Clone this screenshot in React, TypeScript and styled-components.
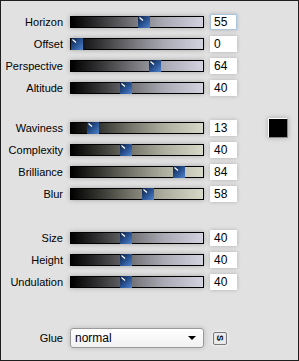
import React from 'react';
import styled, { createGlobalStyle } from 'styled-components';

interface SliderRowProps {
  label: string;
  value: number;
  tone: 'blue' | 'sand';
  focused?: boolean;
  extra?: React.ReactNode;
}

const GlobalStyle = createGlobalStyle`
  html, body {
    margin: 0;
    padding: 0;
    background: #e1e1e1;
  }
  * {
    box-sizing: border-box;
  }
`;

const tracks = {
  blue: 'linear-gradient(to right, #000 0%, #2a2a2c 18%, #707074 45%, #a9a9b4 70%, #d3d3e0 100%)',
  sand: 'linear-gradient(to right, #000 0%, #2c2c28 18%, #74746a 45%, #adad9e 70%, #d8d8c8 100%)',
};

const Thumb = () => (
  <svg width="12" height="12" viewBox="0 0 12 12">
    <defs>
      <linearGradient id="tg" x1="0" y1="0" x2="1" y2="1">
        <stop offset="0" stopColor="#0d1f40" />
        <stop offset="0.5" stopColor="#27508f" />
        <stop offset="1" stopColor="#4f84cc" />
      </linearGradient>
    </defs>
    <rect x="0" y="0" width="12" height="12" fill="url(#tg)" />
    <path d="M1.5 1.5 L5 4.5" stroke="#fff" strokeWidth="1.2" />
  </svg>
);

const SliderRow: React.FC<SliderRowProps> = ({ label, value, tone, focused, extra }) => (
  <Row>
    <Label>{label}</Label>
    <Track $tone={tone}>
      <ThumbSlot style={{ left: `${(value / 100) * 122}px` }}>
        <Thumb />
      </ThumbSlot>
    </Track>
    <ValueBox $focused={focused}>{value}</ValueBox>
    {extra}
  </Row>
);

export default function App() {
  return (
    <>
      <GlobalStyle />
      <Panel>
        <Group>
          <SliderRow label="Horizon" value={55} tone="blue" focused />
          <SliderRow label="Offset" value={0} tone="blue" />
          <SliderRow label="Perspective" value={64} tone="blue" />
          <SliderRow label="Altitude" value={40} tone="blue" />
        </Group>
        <Group $top={18}>
          <SliderRow label="Waviness" value={13} tone="sand" extra={<Swatch />} />
          <SliderRow label="Complexity" value={40} tone="sand" />
          <SliderRow label="Brilliance" value={84} tone="sand" />
          <SliderRow label="Blur" value={58} tone="sand" />
        </Group>
        <Group $top={22}>
          <SliderRow label="Size" value={40} tone="blue" />
          <SliderRow label="Height" value={40} tone="blue" />
          <SliderRow label="Undulation" value={40} tone="blue" />
        </Group>
        <Row $top={34}>
          <Label>Glue</Label>
          <Select>
            <span>normal</span>
            <Arrow />
          </Select>
          <SmallButton>
            <span>S</span>
          </SmallButton>
        </Row>
      </Panel>
    </>
  );
}

const Panel = styled.div`
  width: 299px;
  height: 361px;
  border: 1px solid #1e1e1e;
  background: #e1e1e1;
  padding-top: 10px;
  font-family: 'Liberation Sans', Arial, sans-serif;
  color: #000;
`;

const Group = styled.div<{ $top?: number }>`
  display: flex;
  flex-direction: column;
  margin-top: ${p => p.$top ?? 0}px;
`;

const Row = styled.div<{ $top?: number }>`
  display: flex;
  align-items: center;
  height: 22px;
  margin-top: ${p => p.$top ?? 0}px;
`;

const Label = styled.div`
  width: 62px;
  text-align: right;
  font-size: 11px;
  margin-right: 7px;
  white-space: nowrap;
`;

const Track = styled.div<{ $tone: 'blue' | 'sand' }>`
  position: relative;
  width: 134px;
  height: 12px;
  border: 1px solid #000;
  background: ${p => tracks[p.$tone]};
  box-shadow: 0 0 5px rgba(0, 0, 0, 0.28);
`;

const ThumbSlot = styled.div`
  position: absolute;
  top: -1px;
  width: 12px;
  height: 12px;
  line-height: 0;
`;

const ValueBox = styled.div<{ $focused?: boolean }>`
  width: 27px;
  height: 16px;
  margin-left: 6px;
  background: #fff;
  border: 1px solid ${p => (p.$focused ? '#a9c4de' : '#fff')};
  box-shadow: 0 0 4px rgba(0, 0, 0, 0.22);
  font-size: 12px;
  line-height: 14px;
  padding-left: 3px;
`;

const Swatch = styled.div`
  width: 20px;
  height: 20px;
  margin-left: 31px;
  background: #000;
  border: 1px solid;
  border-color: #fff #8a8a8a #8a8a8a #fff;
  box-shadow: 0 0 5px rgba(0, 0, 0, 0.25);
`;

const Select = styled.div`
  display: flex;
  align-items: center;
  justify-content: space-between;
  width: 134px;
  height: 20px;
  padding: 0 7px 0 4px;
  background: linear-gradient(#ffffff, #f1f1f1);
  border: 1px solid #9a9a9a;
  border-radius: 3px;
  box-shadow: 0 0 5px rgba(0, 0, 0, 0.18);
  font-size: 12px;
`;

const Arrow = styled.div`
  width: 0;
  height: 0;
  border-left: 4px solid transparent;
  border-right: 4px solid transparent;
  border-top: 4px solid #000;
`;

const SmallButton = styled.div`
  display: flex;
  align-items: center;
  justify-content: center;
  width: 14px;
  height: 13px;
  margin-left: 9px;
  border: 1px solid #7a7a7a;
  border-radius: 2px;
  background: #eaeaea;
  box-shadow: 0 0 4px rgba(255, 255, 255, 0.9);
  font-size: 9px;
  font-weight: bold;

  span {
    display: inline-block;
    transform: rotate(90deg);
  }
`;
